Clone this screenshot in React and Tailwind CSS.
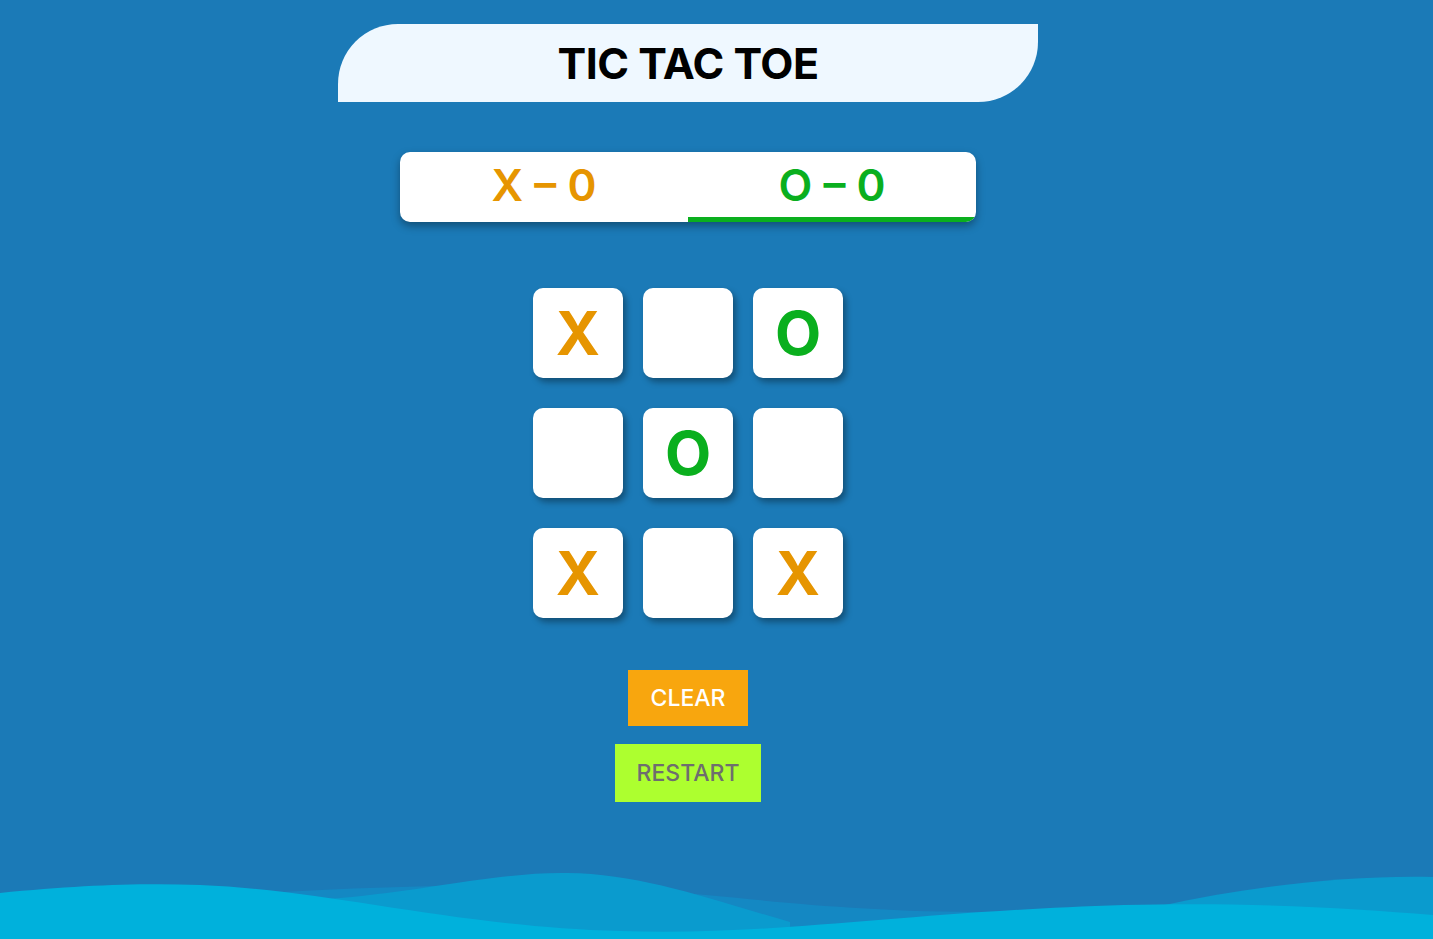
import React, { useState } from 'react';

const board = ['X', '', 'O', '', 'O', '', 'X', '', 'X'];

const Waves = () => (
  <svg
    className="absolute bottom-0 left-0 w-full h-[89px]"
    viewBox="0 0 1433 89"
    preserveAspectRatio="none"
  >
    <path
      d="M0,89 L0,62 C200,45 380,34 540,35 C690,36 790,62 990,62 C1150,62 1300,42 1433,40 L1433,89 Z"
      fill="#1488c3"
    />
    <path
      d="M0,89 L0,70 C150,60 250,55 340,48 C430,40 500,22 567,23 C640,24 700,46 790,72 L790,89 Z"
      fill="#0a9bce"
    />
    <path
      d="M1100,89 L1160,56 C1250,36 1350,25 1433,27 L1433,89 Z"
      fill="#0a9bce"
    />
    <path
      d="M0,43 C80,35 140,33 200,35 C330,40 450,76 620,81 C780,86 900,62 1124,55 C1250,52 1350,58 1433,65 L1433,89 L0,89 Z"
      fill="#00b1dc"
    />
  </svg>
);

const Cell = ({ value }) => (
  <button className="w-[90px] h-[90px] bg-white rounded-[10px] shadow-[3px_4px_6px_rgba(0,0,0,0.35)] flex items-center justify-center">
    {value === 'X' && <span className="text-[60px] font-bold leading-none text-[#e69500]">X</span>}
    {value === 'O' && <span className="text-[60px] font-bold leading-none text-[#0aaf1e]">O</span>}
  </button>
);

const App = () => {
  const [cells] = useState(board);

  return (
    <div
      className="relative min-h-screen overflow-hidden bg-[#1b7ab7] flex flex-col items-center pr-[57px]"
      style={{ fontFamily: 'Inter, "Open Sans", sans-serif' }}
    >
      <div className="mt-[24px] w-[700px] h-[78px] bg-[#eff8ff] rounded-tl-[60px] rounded-br-[60px] flex items-center justify-center">
        <h1 className="text-[43px] font-bold tracking-[-0.5px] text-black">TIC TAC TOE</h1>
      </div>

      <div className="mt-[50px] w-[576px] h-[70px] bg-white rounded-[10px] shadow-[0_4px_8px_rgba(0,0,0,0.35)] flex overflow-hidden">
        <div className="flex-1 flex items-center justify-center text-[44px] font-semibold text-[#e69500] pb-[5px]">
          X – 0
        </div>
        <div className="flex-1 flex items-center justify-center text-[44px] font-semibold text-[#0aaf1e] border-b-[5px] border-[#0aaf1e]">
          O – 0
        </div>
      </div>

      <div className="mt-[66px] grid grid-cols-3 gap-x-[20px] gap-y-[30px]">
        {cells.map((c, i) => (
          <Cell key={i} value={c} />
        ))}
      </div>

      <button className="mt-[52px] w-[120px] h-[56px] bg-[#f8a60e] text-white text-[23px] font-medium">
        CLEAR
      </button>
      <button className="mt-[18px] w-[146px] h-[58px] bg-[#adff2f] text-[#6e6e6e] text-[23px] font-medium">
        RESTART
      </button>

      <Waves />
    </div>
  );
};

export default App;
